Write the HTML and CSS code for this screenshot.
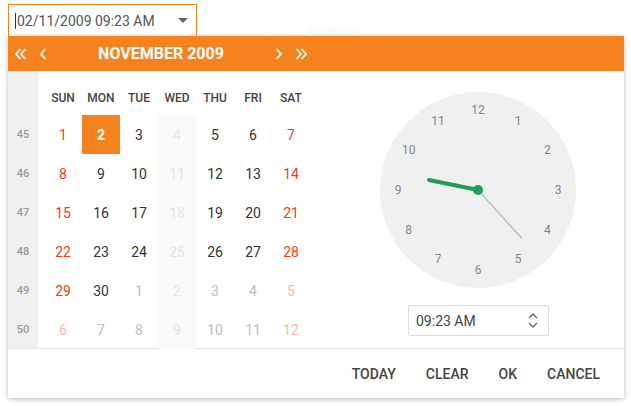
FILE: index.html
```html
<!DOCTYPE html>
<html>
<head>
<meta charset="utf-8">
<link rel="stylesheet" href="styles.css">
</head>
<body>
<div class="top">
  <div class="dt-input">
    <span class="caret"></span>
    <span class="dt-value">02/11/2009 09:23 AM</span>
    <span class="dd-arrow"></span>
  </div>
  <div class="ghost-panel"><span class="ghost-text">Options</span></div>
</div>
<div class="popup">
  <div class="header">
    <div class="nav">
      <span class="nav-btn"><svg width="12" height="12" viewBox="0 0 12 12"><path d="M5.5 1 L1 6 L5.5 11 M10.5 1 L6 6 L10.5 11" fill="none" stroke="#fff" stroke-width="1.7"/></svg></span>
      <span class="nav-btn"><svg width="8" height="12" viewBox="0 0 8 12"><path d="M6.5 1 L2 6 L6.5 11" fill="none" stroke="#fff" stroke-width="1.7"/></svg></span>
      <span class="title">NOVEMBER 2009</span>
      <span class="nav-btn"><svg width="8" height="12" viewBox="0 0 8 12"><path d="M1.5 1 L6 6 L1.5 11" fill="none" stroke="#fff" stroke-width="1.7"/></svg></span>
      <span class="nav-btn"><svg width="12" height="12" viewBox="0 0 12 12"><path d="M1.5 1 L6 6 L1.5 11 M6.5 1 L11 6 L6.5 11" fill="none" stroke="#fff" stroke-width="1.7"/></svg></span>
    </div>
  </div>
  <div class="body">
    <div class="calendar">
      <div class="weeks">
        <div class="wk-head"></div>
        <div class="wk">45</div>
        <div class="wk">46</div>
        <div class="wk">47</div>
        <div class="wk">48</div>
        <div class="wk">49</div>
        <div class="wk">50</div>
      </div>
      <div class="grid">
        <div class="dn">SUN</div><div class="dn">MON</div><div class="dn">TUE</div><div class="dn">WED</div><div class="dn">THU</div><div class="dn">FRI</div><div class="dn">SAT</div>

        <div class="d we">1</div><div class="d sel">2</div><div class="d">3</div><div class="d dis">4</div><div class="d">5</div><div class="d">6</div><div class="d we">7</div>
        <div class="d we">8</div><div class="d">9</div><div class="d">10</div><div class="d dis">11</div><div class="d">12</div><div class="d">13</div><div class="d we">14</div>
        <div class="d we">15</div><div class="d">16</div><div class="d">17</div><div class="d dis">18</div><div class="d">19</div><div class="d">20</div><div class="d we">21</div>
        <div class="d we">22</div><div class="d">23</div><div class="d">24</div><div class="d dis">25</div><div class="d">26</div><div class="d">27</div><div class="d we">28</div>
        <div class="d we">29</div><div class="d">30</div><div class="d om">1</div><div class="d dis">2</div><div class="d om">3</div><div class="d om">4</div><div class="d omwe">5</div>
        <div class="d omwe">6</div><div class="d om">7</div><div class="d om">8</div><div class="d dis">9</div><div class="d om">10</div><div class="d om">11</div><div class="d omwe">12</div>
      </div>
    </div>
    <div class="clock-side">
      <svg class="clock" width="196" height="196" viewBox="0 0 196 196">
        <circle cx="98" cy="98" r="98" fill="#f0f0f0"/>
        <g class="nums" fill="#868686" font-size="12" text-anchor="middle" dominant-baseline="central">
          <text x="98" y="18">12</text>
          <text x="138" y="28.7">1</text>
          <text x="167.3" y="58">2</text>
          <text x="178" y="98">3</text>
          <text x="167.3" y="138">4</text>
          <text x="138" y="167.3">5</text>
          <text x="98" y="178">6</text>
          <text x="58" y="167.3">7</text>
          <text x="28.7" y="138">8</text>
          <text x="18" y="98">9</text>
          <text x="28.7" y="58">10</text>
          <text x="58" y="28.7">11</text>
        </g>
        <line x1="98" y1="98" x2="142" y2="146.5" stroke="#bdbdbd" stroke-width="1.5"/>
        <line x1="98" y1="98" x2="49" y2="88" stroke="#1f9e55" stroke-width="4" stroke-linecap="round"/>
        <circle cx="98" cy="98" r="5" fill="#1f9e55"/>
      </svg>
      <div class="time-input">
        <span class="time-val">09:23 AM</span>
        <span class="spin">
          <svg width="10" height="6" viewBox="0 0 10 6"><path d="M1 5 L5 1 L9 5" fill="none" stroke="#666" stroke-width="1.3"/></svg>
          <svg width="10" height="6" viewBox="0 0 10 6"><path d="M1 1 L5 5 L9 1" fill="none" stroke="#666" stroke-width="1.3"/></svg>
        </span>
      </div>
    </div>
  </div>
  <div class="footer">
    <span class="btn">TODAY</span>
    <span class="btn">CLEAR</span>
    <span class="btn">OK</span>
    <span class="btn">CANCEL</span>
  </div>
</div>
</body>
</html>
```

FILE: styles.css
```css
* { box-sizing: border-box; }
html, body { margin: 0; padding: 0; background: #fff; }
body {
  font-family: Roboto, "Liberation Sans", sans-serif;
  color: #333;
  width: 631px;
  height: 406px;
  overflow: hidden;
}
.top {
  display: flex;
  height: 36px;
  padding-top: 4px;
}
.dt-input {
  margin-left: 8px;
  width: 189px;
  height: 32px;
  border: 1px solid #f6821f;
  border-bottom: none;
  display: flex;
  align-items: center;
  padding: 0 0 0 6px;
}
.caret {
  width: 1px;
  height: 16px;
  background: #333;
  margin-right: 1px;
}
.dt-value {
  font-size: 14px;
  color: #555;
  flex: 1;
  line-height: 16px;
  padding-top: 1px;
}
.dd-arrow {
  width: 0;
  height: 0;
  border-left: 5px solid transparent;
  border-right: 5px solid transparent;
  border-top: 5px solid #666;
  margin-right: 8px;
}
.ghost-panel {
  margin-left: 69px;
  flex: 1;
  margin-right: 4px;
  margin-top: 2px;
  border: 1px solid #fbfbfb;
  border-bottom: none;
  border-radius: 8px 8px 0 0;
  padding: 15px 0 0 41px;
}
.ghost-text {
  font-size: 15px;
  font-weight: 500;
  color: #f8f8f8;
}
.popup {
  margin-left: 8px;
  width: 616px;
  height: 362px;
  background: #fff;
  box-shadow: 0 1px 5px rgba(0,0,0,0.28);
  display: flex;
  flex-direction: column;
}
.header {
  height: 35px;
  background: #f6821f;
  display: flex;
  align-items: center;
}
.nav {
  margin-left: 2px;
  width: 302px;
  display: flex;
  align-items: center;
}
.nav-btn {
  width: 22px;
  height: 20px;
  display: flex;
  align-items: center;
  justify-content: center;
}
.title {
  flex: 1;
  text-align: center;
  color: #fff;
  font-weight: 700;
  font-size: 16px;
}
.body {
  display: flex;
  height: 278px;
  border-bottom: 1px solid #e6e6e6;
}
.calendar {
  display: flex;
  width: 302px;
}
.weeks {
  width: 30px;
  background: #f0f0f0;
  display: grid;
  grid-template-rows: 44px repeat(6, 39px);
}
.wk {
  display: flex;
  align-items: center;
  justify-content: center;
  font-size: 11px;
  font-weight: 500;
  color: #999;
}
.grid {
  margin-left: 6px;
  display: grid;
  grid-template-columns: repeat(7, 38px);
  grid-template-rows: 44px repeat(6, 39px);
}
.dn {
  display: flex;
  align-items: flex-end;
  justify-content: center;
  padding-bottom: 10px;
  font-size: 12px;
  font-weight: 500;
  color: #444;
}
.d {
  display: flex;
  align-items: center;
  justify-content: center;
  font-size: 14px;
  color: #333;
}
.d.we { color: #f43a16; }
.d.om { color: #bdbdbd; }
.d.omwe { color: #fbb9a8; }
.d.dis { color: #e6e6e6; background: #fafafa; }
.d.sel { background: #f6821f; color: #fff; font-weight: 700; }
.clock-side {
  flex: 1;
  padding-left: 22px;
  display: flex;
  flex-direction: column;
  align-items: center;
  padding-top: 21px;
}
.clock { display: block; }
.clock .nums { font-family: Roboto, "Liberation Sans", sans-serif; }
.time-input {
  margin-top: 17px;
  margin-left: 1px;
  width: 141px;
  height: 31px;
  border: 1px solid #ddd;
  border-radius: 2px;
  display: flex;
  align-items: center;
  padding: 0 10px 0 7px;
}
.time-val {
  flex: 1;
  font-size: 14px;
  color: #444;
}
.spin {
  display: flex;
  flex-direction: column;
  gap: 3px;
}
.spin svg { display: block; }
.footer {
  flex: 1;
  display: flex;
  justify-content: flex-end;
  align-items: center;
  padding-right: 9px;
}
.btn {
  padding: 0 15px;
  font-size: 14px;
  font-weight: 500;
  color: #444;
}
```
